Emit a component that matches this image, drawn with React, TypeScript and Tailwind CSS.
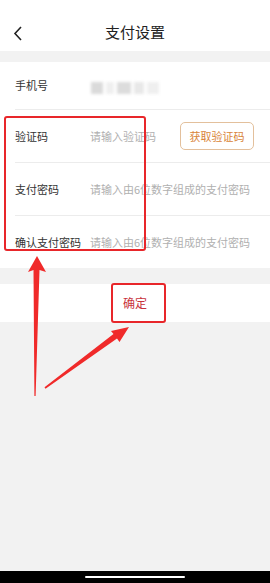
import React from "react";

const font = { fontFamily: '"Noto Sans CJK SC", "Noto Sans", sans-serif' };

function Row({
  label,
  placeholder,
  last,
  height = "h-[53px]",
  children,
}: {
  label: string;
  placeholder?: string;
  last?: boolean;
  height?: string;
  children?: React.ReactNode;
}) {
  return (
    <div className="pl-[15px]">
      <div
        className={
          "flex items-center pr-[16px] " +
          height +
          " " +
          (last ? "" : "border-b border-[#ececec]")
        }
      >
        <div className="w-[75px] shrink-0 text-[11px] text-[#333]">{label}</div>
        <div className="flex-1 truncate text-[11px] text-[#b0b0b0]">{placeholder}</div>
        {children}
      </div>
    </div>
  );
}

function Annotations() {
  return (
    <svg
      className="pointer-events-none absolute left-0 top-0"
      width="270"
      height="583"
      viewBox="0 0 270 583"
    >
      {/* box round the form labels */}
      <rect x="5" y="117" width="140" height="133" rx="2" fill="none" stroke="#e8262a" strokeWidth="2" />
      {/* box round the confirm text */}
      <rect x="112" y="284" width="53" height="38" rx="2" fill="none" stroke="#e8262a" strokeWidth="2" />
      {/* arrow up */}
      <polygon
        points="37,256 46,272 39.5,270 35.6,396 34.4,396 33.5,270 28,272"
        fill="#f02a2a"
      />
      {/* arrow towards confirm */}
      <polygon
        points="129,327 119.5,342 117,338.5 45.5,388.8 44.5,387.3 113.5,334 111,331"
        fill="#f02a2a"
      />
    </svg>
  );
}

export default function App() {
  return (
    <div className="relative flex h-[583px] w-[270px] flex-col overflow-hidden bg-[#f2f2f2]" style={font}>
      <div className="relative flex h-[51px] items-center justify-center bg-white">
        <svg className="absolute left-[13px] top-[26px]" width="10" height="15" viewBox="0 0 10 15">
          <path d="M8 1 L2 7.5 L8 14" fill="none" stroke="#222" strokeWidth="1.6" />
        </svg>
        <div className="mt-[13px] text-[15px] text-[#222]">支付设置</div>
      </div>

      <div className="mt-[11px] bg-white">
        <Row label="手机号" height="h-[48px]">
          <span />
        </Row>
        <Row label="验证码" placeholder="请输入验证码">
          <button className="h-[28px] w-[74px] rounded-[5px] border border-[#e3c09c] text-[11px] text-[#d9843a]">
            获取验证码
          </button>
        </Row>
        <Row label="支付密码" placeholder="请输入由6位数字组成的支付密码" />
        <Row label="确认支付密码" placeholder="请输入由6位数字组成的支付密码" height="h-[52px]" last />
      </div>

      <div className="mt-[16px] flex h-[38px] items-center justify-center bg-white">
        <span className="text-[12px] text-[#c8323c]">确定</span>
      </div>

      <div className="flex-1" />
      <div className="flex h-[12px] items-center justify-center bg-black">
        <div className="h-[2px] w-[100px] rounded-full bg-white" />
      </div>

      {/* blurred phone number */}
      <div className="absolute left-[91px] top-[82px] flex h-[12px] w-[68px] gap-[3px] blur-[1.5px]">
        <div className="w-[12px] bg-[#dadada]" />
        <div className="w-[8px] bg-[#efefef]" />
        <div className="w-[14px] bg-[#dcdcdc]" />
        <div className="w-[10px] bg-[#e8e8e8]" />
        <div className="w-[12px] bg-[#efefef]" />
      </div>

      <Annotations />
    </div>
  );
}
